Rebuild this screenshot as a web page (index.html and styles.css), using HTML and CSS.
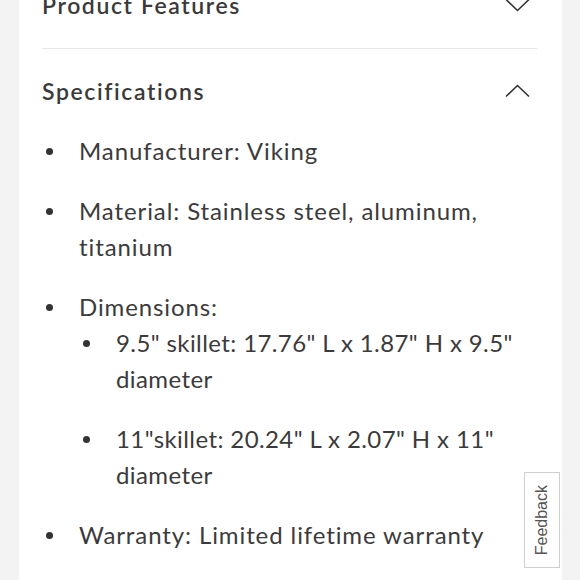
FILE: index.html
```html
<!DOCTYPE html>
<html>
<head>
<meta charset="utf-8">
<link rel="stylesheet" href="styles.css">
</head>
<body>
<div class="card">
  <div class="acc-head first">
    <span class="acc-title">Product Features</span>
    <svg class="chev" width="25" height="14" viewBox="0 0 25 14"><polyline points="1,1.5 12.5,12.5 24,1.5" fill="none" stroke="#333" stroke-width="1.6"/></svg>
  </div>
  <div class="acc-head second">
    <span class="acc-title">Specifications</span>
    <svg class="chev" width="25" height="14" viewBox="0 0 25 14"><polyline points="1,12.5 12.5,1.5 24,12.5" fill="none" stroke="#333" stroke-width="1.6"/></svg>
  </div>
  <ul class="specs">
    <li><div>Manufacturer: Viking</div></li>
    <li><div>Material: Stainless steel, aluminum, titanium</div></li>
    <li><div>Dimensions:
      <ul class="sub">
        <li><div>9.5" skillet: 17.76" L x 1.87" H x 9.5" diameter</div></li>
        <li><div>11"skillet: 20.24" L x 2.07" H x 11" diameter</div></li>
      </ul></div></li>
    <li><div>Warranty: Limited lifetime warranty</div></li>
  </ul>
</div>
<div class="feedback"><span>Feedback</span></div>
</body>
</html>
```
FILE: styles.css
```css
html, body {
  margin: 0;
  padding: 0;
  background: #f3f3f3;
  height: 100%;
  overflow: hidden;
}
.card {
  margin: -33px 18px 0 19px;
  padding: 0 25px 40px 23px;
  background: #fff;
  font-family: "Lato", "Open Sans", sans-serif;
  color: #3b3b3b;
}
.acc-head {
  display: flex;
  justify-content: space-between;
  align-items: center;
}
.acc-head.first {
  padding: 24px 7px 29px 0;
  border-bottom: 1px solid #e6e8e8;
}
.acc-head.second {
  padding: 28px 7px 28px 0;
}
.acc-title {
  font-size: 23px;
  line-height: 28px;
  font-weight: 600;
  letter-spacing: 1.6px;
  color: #3a3a3a;
}
.specs, .sub {
  list-style: none;
  margin: 0;
  padding: 0;
}
.specs {
  font-size: 24px;
  line-height: 36px;
  letter-spacing: 0.9px;
}
.sub {
  letter-spacing: 0.4px;
}
.specs li {
  display: flex;
}
.specs li + li {
  margin-top: 24px;
}
.specs li::before {
  content: "";
  flex: 0 0 7px;
  height: 7px;
  border-radius: 50%;
  background: #333;
  margin: 15px 26px 0 4px;
}
.feedback {
  position: fixed;
  right: 20px;
  bottom: 12px;
  width: 34px;
  height: 94px;
  background: #fff;
  border: 1px solid #cfcfcf;
  display: flex;
  align-items: center;
  justify-content: center;
}
.feedback span {
  writing-mode: vertical-rl;
  transform: rotate(180deg);
  font-family: "Liberation Sans", Arial, sans-serif;
  font-size: 16px;
  color: #555;
}
```
